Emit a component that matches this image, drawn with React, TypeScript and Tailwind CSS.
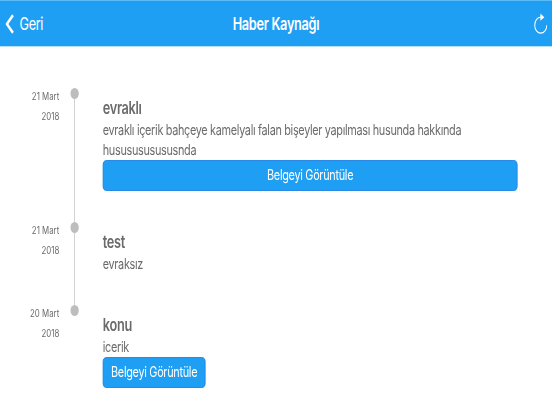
import clsx from "clsx";

interface NewsItem {
  id: number;
  day: string;
  year: string;
  title: string;
  lines: string[];
  button?: "full" | "inline";
}

const items: NewsItem[] = [
  {
    id: 1,
    day: "21 Mart",
    year: "2018",
    title: "evraklı",
    lines: [
      "evraklı içerik bahçeye kamelyalı falan bişeyler yapılması husunda hakkında",
      "h" + "us".repeat(6) + "nda",
    ],
    button: "full",
  },
  { id: 2, day: "21 Mart", year: "2018", title: "test", lines: ["evraksız"] },
  {
    id: 3,
    day: "20 Mart",
    year: "2018",
    title: "konu",
    lines: ["icerik"],
    button: "inline",
  },
];

export default function App() {
  return (
    <div className="h-[414px] w-[552px] overflow-hidden bg-white font-['Inter',sans-serif]">
      {/* Landscape phone canvas, condensed to a 4:3 frame */}
      <div className="h-[414px] w-[736px] origin-left scale-x-75">
        <Header />
        <main className="pt-[41px]">
          {items.map((item, idx) => (
            <TimelineRow
              key={item.id}
              item={item}
              isLast={idx === items.length - 1}
            />
          ))}
        </main>
      </div>
    </div>
  );
}

function Header() {
  return (
    <header className="grid h-[47px] grid-cols-3 items-center border-t border-b border-t-[#5bbcf8] border-b-[#b5dffb] bg-[#1f9ff3] text-white">
      <button type="button" className="flex items-center gap-[7px] pl-[7px]">
        <svg className="h-5 w-[12px]" fill="none" viewBox="0 0 12 20" stroke="currentColor" strokeWidth={3}>
          <path d="M10.3 1.2L2.2 10l8.1 8.8" />
        </svg>
        <span className="text-[17px] leading-[22px] tracking-[-0.5px]">Geri</span>
      </button>
      <h1 className="text-center text-[17px] leading-[22px] font-semibold tracking-[-0.4px]">
        Haber Kaynağı
      </h1>
      <button type="button" aria-label="Yenile" className="justify-self-end pt-px pr-[6px]">
        <svg className="h-[22px] w-[18px]" fill="none" viewBox="0 0 18 22" stroke="currentColor" strokeWidth={1.3}>
          <path d="M10 4.2H9a8 8 0 1 0 8 8" />
          <path d="M8.5 .5l5.3 3.7-5.3 3.6z" fill="currentColor" stroke="none" />
        </svg>
      </button>
    </header>
  );
}

function TimelineRow({ item, isLast }: { item: NewsItem; isLast: boolean }) {
  return (
    <article
      className={clsx(
        "flex",
        item.id === 1 && "h-[134px]",
        item.id === 2 && "h-[83px]",
      )}
    >
      <div className="-mt-px w-[79px] shrink-0 text-right text-[10.5px] leading-5 text-[#6b6b6b]">
        <p>{item.day}</p>
        <p>{item.year}</p>
      </div>

      {/* Dot and connector line */}
      <div className="flex w-[41px] shrink-0 flex-col items-center">
        <div className="size-[11px] shrink-0 rounded-full bg-[#bdbdbd]" />
        {!isLast && <div className="w-[1.4px] grow bg-[#c4c4c4]" />}
      </div>

      <div className="ml-[17px] w-[553px] pt-[8px] text-[#6b6b6b]">
        <h2 className="text-[17px] leading-[24px] font-semibold tracking-[-0.4px]">{item.title}</h2>
        <div className="text-[14.5px] leading-5 tracking-[-0.43px]">
          {item.lines.map((line) => (
            <p key={line} className="whitespace-nowrap">
              {line}
            </p>
          ))}
        </div>
        {item.button && (
          <button
            type="button"
            className={clsx(
              "flex h-[31px] items-center justify-center rounded-[5px] border border-[#1a80e2] bg-[#1f9ff3] pb-[2px] text-[14.5px] tracking-[-0.4px] text-white",
              item.button === "full" ? "w-full" : "w-[137px]",
            )}
          >
            Belgeyi Görüntüle
          </button>
        )}
      </div>
    </article>
  );
}
